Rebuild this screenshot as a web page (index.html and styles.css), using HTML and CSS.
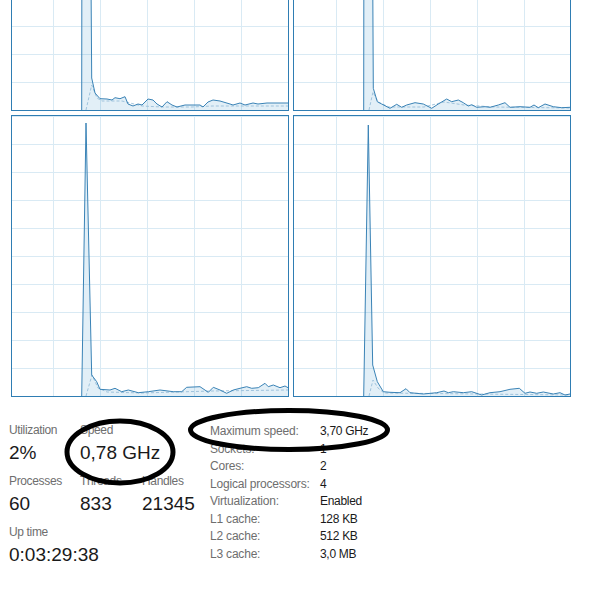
FILE: index.html
```html
<!DOCTYPE html>
<html lang="en">
<head>
  <meta charset="UTF-8">
  <meta name="viewport" content="width=device-width, initial-scale=1.0">
  <title>CPU</title>
  <link rel="stylesheet" href="styles.css">
</head>
<body>

  <!-- logical processor graphs, 2 x 2 -->
  <div class="graphs">
    <div class="graph">
      <svg viewBox="0 0 276 280" width="276" height="280">
        <path class="area" d="M69.7,280 L70,7 L78,7 L79.7,248 L83,263 L88,268.7 L95,269 L100,270 L103,267.7 L108,268.7 L113,266.7 L116,274 L121,276 L126,274 L130,275 L136,269 L141,270 L145,274 L150,277 L155,271.7 L160,275 L165,277 L173,275 L188,275 L191,277 L196,272 L201,270 L208,271 L218,274 L221,275 L228,273 L233,275 L241,273 L246,274 L255,273 L276,273 L276,280 Z"/>
        <path class="kernel" d="M74,280 L79.7,255 L85,268 L90,271 L110,271 L130,276 L150,277 L180,277 L200,276 L230,276 L276,276"/>
        <path class="line" d="M69.7,280 L70,7 L78,7 L79.7,248 L83,263 L88,268.7 L95,269 L100,270 L103,267.7 L108,268.7 L113,266.7 L116,274 L121,276 L126,274 L130,275 L136,269 L141,270 L145,274 L150,277 L155,271.7 L160,275 L165,277 L173,275 L188,275 L191,277 L196,272 L201,270 L208,271 L218,274 L221,275 L228,273 L233,275 L241,273 L246,274 L255,273 L276,273"/>
      </svg>
    </div>
    <div class="graph graph-right">
      <svg viewBox="0 0 276 280" width="276" height="280">
        <path class="area" d="M69.7,280 L70,7 L78,7 L79.3,258.3 L83.3,271.7 L87.7,274 L96,278.3 L102.7,274.3 L107.7,277.3 L112.7,275 L121,272.7 L129.3,274 L137.7,278.3 L144.3,274 L152.7,269 L157.7,271.7 L164.3,270 L169.3,272.7 L174.3,276 L177.7,274.7 L182.7,277.3 L191,276.7 L196,277.3 L204.3,275 L211,272.7 L216,277.3 L226,276.7 L236,277.3 L240,275 L244.3,277.7 L251,274 L259.3,276.7 L267.7,277.7 L276,277.3 L276,280 Z"/>
        <path class="kernel" d="M75,280 L79,262 L84,272 L95,277 L130,277 L150,272 L170,275 L200,277 L276,278"/>
        <path class="line" d="M69.7,280 L70,7 L78,7 L79.3,258.3 L83.3,271.7 L87.7,274 L96,278.3 L102.7,274.3 L107.7,277.3 L112.7,275 L121,272.7 L129.3,274 L137.7,278.3 L144.3,274 L152.7,269 L157.7,271.7 L164.3,270 L169.3,272.7 L174.3,276 L177.7,274.7 L182.7,277.3 L191,276.7 L196,277.3 L204.3,275 L211,272.7 L216,277.3 L226,276.7 L236,277.3 L240,275 L244.3,277.7 L251,274 L259.3,276.7 L267.7,277.7 L276,277.3"/>
      </svg>
    </div>
    <div class="graph">
      <svg viewBox="0 0 276 280" width="276" height="280">
        <path class="area" d="M69.7,280 L74,7 L79.7,259 L84.7,265.7 L88,273.3 L98,274 L103,272.3 L109.7,275.7 L116.3,274 L126.3,276.7 L136.3,275.7 L148,274 L161.3,275.7 L169.7,275.7 L174.7,271.3 L188,270.7 L196.3,276.3 L201.3,271.3 L208,274 L214.7,277.3 L221.3,274 L228,272.3 L234.7,270.7 L239.7,272.3 L246.3,271.7 L253,267.3 L256.3,270.7 L261.3,269 L268,271.7 L273,270 L276,271.7 L276,280 Z"/>
        <path class="kernel" d="M74,280 L80,259 L86,272 L95,276 L130,277 L200,275 L276,274"/>
        <path class="line" d="M69.7,280 L74,7 L79.7,259 L84.7,265.7 L88,273.3 L98,274 L103,272.3 L109.7,275.7 L116.3,274 L126.3,276.7 L136.3,275.7 L148,274 L161.3,275.7 L169.7,275.7 L174.7,271.3 L188,270.7 L196.3,276.3 L201.3,271.3 L208,274 L214.7,277.3 L221.3,274 L228,272.3 L234.7,270.7 L239.7,272.3 L246.3,271.7 L253,267.3 L256.3,270.7 L261.3,269 L268,271.7 L273,270 L276,271.7"/>
      </svg>
    </div>
    <div class="graph graph-right">
      <svg viewBox="0 0 276 280" width="276" height="280">
        <path class="area" d="M69.7,280 L74.3,9 L78.7,249 L83.3,265.7 L89.3,275.7 L96,276.3 L106,276.7 L112,272.7 L116,276.7 L129.3,278 L142.7,276.7 L150,275 L154.3,276.7 L159.3,275.7 L169.3,276.7 L177.7,275.7 L187.7,279 L196,276.7 L206,275.7 L216,273.3 L225.3,272.3 L231,277.3 L236,276 L242.7,277.3 L249.3,276 L259.3,278 L266,276.7 L271,279 L276,278 L276,280 Z"/>
        <path class="kernel" d="M75,280 L79,264 L84,272 L90,277 L276,279"/>
        <path class="line" d="M69.7,280 L74.3,9 L78.7,249 L83.3,265.7 L89.3,275.7 L96,276.3 L106,276.7 L112,272.7 L116,276.7 L129.3,278 L142.7,276.7 L150,275 L154.3,276.7 L159.3,275.7 L169.3,276.7 L177.7,275.7 L187.7,279 L196,276.7 L206,275.7 L216,273.3 L225.3,272.3 L231,277.3 L236,276 L242.7,277.3 L249.3,276 L259.3,278 L266,276.7 L271,279 L276,278"/>
      </svg>
    </div>
  </div>

  <div class="details">
    <div class="stats">
      <div class="stat">
        <div class="label">Utilization</div>
        <div class="value">2%</div>
      </div>
      <div class="stat stat-wide">
        <div class="label">Speed</div>
        <div class="value">0,78 GHz</div>
      </div>
      <div class="stat">
        <div class="label">Processes</div>
        <div class="value">60</div>
      </div>
      <div class="stat">
        <div class="label">Threads</div>
        <div class="value">833</div>
      </div>
      <div class="stat">
        <div class="label">Handles</div>
        <div class="value">21345</div>
      </div>
      <div class="stat stat-wide">
        <div class="label">Up time</div>
        <div class="value">0:03:29:38</div>
      </div>
    </div>

    <dl class="specs">
      <dt>Maximum speed:</dt><dd>3,70 GHz</dd>
      <dt>Sockets:</dt><dd>1</dd>
      <dt>Cores:</dt><dd>2</dd>
      <dt>Logical processors:</dt><dd>4</dd>
      <dt>Virtualization:</dt><dd>Enabled</dd>
      <dt>L1 cache:</dt><dd>128 KB</dd>
      <dt>L2 cache:</dt><dd>512 KB</dd>
      <dt>L3 cache:</dt><dd>3,0 MB</dd>
    </dl>

    <!-- hand drawn marks over the screenshot -->
    <svg class="marks" viewBox="0 0 589 199" width="589" height="199">
      <ellipse cx="120" cy="55" rx="53" ry="31"/>
      <ellipse cx="289" cy="33" rx="98.5" ry="19.5"/>
    </svg>
  </div>

</body>
</html>
```

FILE: styles.css
```css
body {
  margin: 0;
  background: #ffffff;
  font-family: "Liberation Sans", Arial, sans-serif;
  overflow: hidden;
}
.graphs {
  display: grid;
  grid-template-columns: 278px 278px;
  gap: 4px;
  margin: -171px 0 0 11px;
}
.graph {
  box-sizing: border-box;
  width: 278px;
  height: 282px;
  border: 1px solid #2f7db3;
  background-color: #ffffff;
  background-image:
    linear-gradient(#d9eaf4 1px, transparent 1px),
    linear-gradient(90deg, #d9eaf4 1px, transparent 1px);
  background-size: 47px 28px;
  background-position: 41px 0;
}
.graph-right {
  background-position: 42px 0;
}
.graph svg {
  display: block;
}
.area {
  fill: rgba(17, 125, 187, 0.12);
  stroke: none;
}
.line {
  fill: none;
  stroke: #3a83b6;
  stroke-width: 1;
  stroke-linejoin: round;
}
.kernel {
  fill: none;
  stroke: #9fc3dd;
  stroke-width: 1;
  stroke-dasharray: 3 2;
}

.details {
  position: relative;
  display: flex;
  padding: 25px 0 0 9px;
  height: 174px;
}
.stats {
  width: 201px;
  display: grid;
  grid-template-columns: 71px 62px auto;
  row-gap: 8px;
  align-content: start;
}
.stat-wide {
  grid-column: span 2;
}
.stat-wide:last-child {
  grid-column: 1 / span 3;
}
.label {
  font-size: 12px;
  line-height: 16px;
  color: #6e6e6e;
  letter-spacing: -0.35px;
  white-space: nowrap;
}
.value {
  margin-top: 3px;
  font-size: 19px;
  line-height: 24px;
  color: #1a1a1a;
  white-space: nowrap;
}
.specs {
  margin: 1px 0 0;
  display: grid;
  grid-template-columns: 110px auto;
  align-content: start;
  font-size: 12px;
  line-height: 17.5px;
}
.specs dt {
  color: #6e6e6e;
  letter-spacing: -0.2px;
  white-space: nowrap;
}
.specs dd {
  margin: 0;
  color: #1a1a1a;
  letter-spacing: -0.3px;
}
.marks {
  position: absolute;
  top: 0;
  left: 0;
}
.marks ellipse {
  fill: none;
  stroke: #000000;
  stroke-width: 5;
}
```
